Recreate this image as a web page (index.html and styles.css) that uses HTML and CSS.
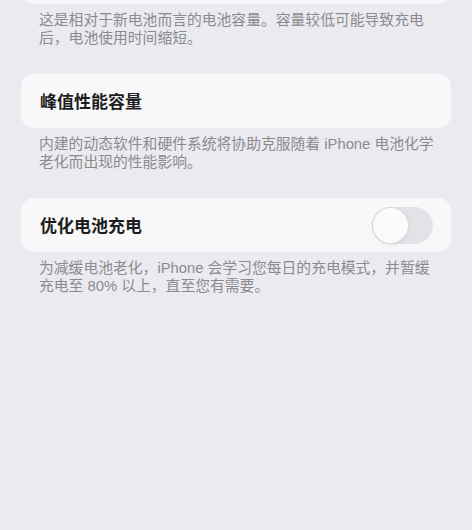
FILE: index.html
```html
<!DOCTYPE html>
<html lang="zh-CN">
<head>
<meta charset="utf-8">
<link rel="stylesheet" href="styles.css">
</head>
<body>
<div class="page">
  <div class="card card-top"></div>
  <p class="caption">这是相对于新电池而言的电池容量。容量较低可能导致充电<br>后，电池使用时间缩短。</p>

  <div class="card">
    <span class="title">峰值性能容量</span>
  </div>
  <p class="caption">内建的动态软件和硬件系统将协助克服随着 iPhone 电池化学<br>老化而出现的性能影响。</p>

  <div class="card">
    <span class="title">优化电池充电</span>
    <span class="toggle"><span class="knob"></span></span>
  </div>
  <p class="caption">为减缓电池老化，iPhone 会学习您每日的充电模式，并暂缓<br>充电至 80% 以上，直至您有需要。</p>
</div>
</body>
</html>
```

FILE: styles.css
```css
html, body {
  margin: 0;
  padding: 0;
  background: #ebeaef;
}
body {
  width: 472px;
  height: 530px;
  overflow: hidden;
  font-family: "Noto Sans CJK SC", "Noto Sans", sans-serif;
}
.page {
  display: flex;
  flex-direction: column;
  padding: 0 21px;
}
.card {
  background: #f8f8fa;
  border-radius: 13px;
  height: 54px;
  display: flex;
  align-items: center;
  justify-content: space-between;
  padding: 0 18px 0 19px;
}
.card-top {
  height: 40px;
  margin-top: -36px;
}
.title {
  font-size: 17px;
  font-weight: 600;
  color: #1e1e20;
  margin-top: -2px;
}
.caption {
  margin: 7px 0 27px 0;
  padding: 0 0 0 18px;
  font-family: "Liberation Sans", "Noto Sans CJK SC", sans-serif;
  font-size: 14.8px;
  line-height: 18px;
  color: #8a8a8f;
  white-space: nowrap;
}
.toggle {
  width: 61px;
  height: 37px;
  border-radius: 19px;
  background: #e3e3e7;
  display: flex;
  align-items: center;
  padding: 0 1px;
  box-sizing: border-box;
}
.knob {
  width: 35px;
  height: 35px;
  border-radius: 50%;
  background: #fbfbfc;
  box-shadow: 0 0 0 1px #d8d8dc, 0 2px 4px rgba(0,0,0,0.08);
}
```
